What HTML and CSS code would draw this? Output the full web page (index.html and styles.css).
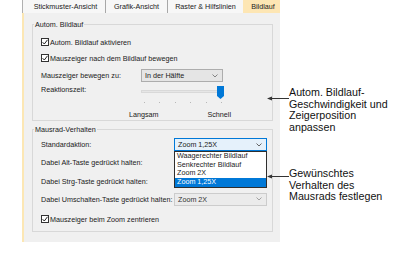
FILE: index.html
```html
<!DOCTYPE html>
<html lang="de">
<head>
<meta charset="utf-8">
<title>Bildlauf</title>
<link rel="stylesheet" href="styles.css">
</head>
<body>
<div class="stage">
  <div class="dialog">
    <div class="tabs">
      <div class="tab t1">Stickmuster-Ansicht</div>
      <div class="tab t2">Grafik-Ansicht</div>
      <div class="tab t3">Raster &amp; Hilfslinien</div>
      <div class="tab t4">Bildlauf</div>
    </div>
    <div class="pane">
      <fieldset class="group g1">
        <legend>Autom. Bildlauf</legend>
        <div class="chk"><span class="cb"><svg width="6" height="6" viewBox="0 0 6 6"><polyline points="0.6,3.2 2.3,5 5.5,0.8" fill="none" stroke="#222" stroke-width="1"/></svg></span>Autom. Bildlauf aktivieren</div>
        <div class="chk c2"><span class="cb"><svg width="6" height="6" viewBox="0 0 6 6"><polyline points="0.6,3.2 2.3,5 5.5,0.8" fill="none" stroke="#222" stroke-width="1"/></svg></span>Mauszeiger nach dem Bildlauf bewegen</div>
        <div class="field f1">
          <span class="lbl">Mauszeiger bewegen zu:</span>
          <div class="sel"><span>In der Hälfte</span><svg class="chev" width="6" height="4" viewBox="0 0 6 4"><polyline points="0.5,0.5 3,3 5.5,0.5" fill="none" stroke="#777" stroke-width="0.9"/></svg></div>
        </div>
        <div class="field f2">
          <span class="lbl">Reaktionszeit:</span>
          <div class="slider">
            <div class="track-area">
              <div class="track"></div>
              <svg class="thumb" width="7" height="13" viewBox="0 0 7 13"><polygon points="0,0 7,0 7,10 3.5,13 0,10" fill="#0078d7"/></svg>
            </div>
            <div class="ticks"><i></i><i></i><i></i><i></i><i></i><i></i></div>
          </div>
        </div>
        <div class="field f3">
          <span></span>
          <div class="ends"><span class="slow">Langsam</span><span class="fast">Schnell</span></div>
        </div>
      </fieldset>
      <fieldset class="group g2">
        <legend>Mausrad-Verhalten</legend>
        <div class="grid2">
          <span class="lbl">Standardaktion:</span>
          <div class="selwrap">
            <div class="sel focus"><span>Zoom 1,25X</span><svg class="chev" width="6" height="4" viewBox="0 0 6 4"><polyline points="0.5,0.5 3,3 5.5,0.5" fill="none" stroke="#555" stroke-width="0.9"/></svg></div>
            <ul class="list">
              <li>Waagerechter Bildlauf</li>
              <li>Senkrechter Bildlauf</li>
              <li>Zoom 2X</li>
              <li class="on">Zoom 1,25X</li>
            </ul>
          </div>
          <span class="lbl">Dabei Alt-Taste gedrückt halten:</span>
          <div class="sel covered"></div>
          <span class="lbl">Dabei Strg-Taste gedrückt halten:</span>
          <div class="sel light covered"></div>
          <span class="lbl">Dabei Umschalten-Taste gedrückt halten:</span>
          <div class="sel light"><span>Zoom 2X</span><svg class="chev" width="6" height="4" viewBox="0 0 6 4"><polyline points="0.5,0.5 3,3 5.5,0.5" fill="none" stroke="#999" stroke-width="0.9"/></svg></div>
        </div>
        <div class="chk c3"><span class="cb"><svg width="6" height="6" viewBox="0 0 6 6"><polyline points="0.6,3.2 2.3,5 5.5,0.8" fill="none" stroke="#222" stroke-width="1"/></svg></span>Mauszeiger beim Zoom zentrieren</div>
      </fieldset>
    </div>
  </div>

  <div class="callout co1">
    <svg class="arrow" width="22" height="5" viewBox="0 0 22 5"><polygon points="0,2.5 5,0.6 5,4.4" fill="#333"/><line x1="4" y1="2.5" x2="22" y2="2.5" stroke="#333" stroke-width="1"/></svg>
    <div class="note">Autom. Bildlauf-<br>Geschwindigkeit und<br>Zeigerposition<br>anpassen</div>
  </div>
  <div class="callout co2">
    <svg class="arrow" width="22" height="5" viewBox="0 0 22 5"><polygon points="0,2.5 5,0.6 5,4.4" fill="#333"/><line x1="4" y1="2.5" x2="22" y2="2.5" stroke="#333" stroke-width="1"/></svg>
    <div class="note">Gewünschtes<br>Verhalten des<br>Mausrads festlegen</div>
  </div>
</div>
</body>
</html>
```
FILE: styles.css
```css
* { box-sizing: border-box; }
html, body { margin: 0; padding: 0; }
body {
  width: 403px;
  height: 260px;
  overflow: hidden;
  background: #ffffff;
  font-family: "Liberation Sans", Arial, sans-serif;
}
.stage {
  position: relative;
  width: 403px;
  height: 260px;
}
.dialog {
  margin-left: 22px;
  width: 258px;
  font-size: 7.2px;
  line-height: 9px;
  color: #1a1a1a;
}
.tabs {
  display: flex;
  height: 13px;
  background: #f7f7f7;
  border-left: 1px solid #b0b0b0;
}
.tab {
  display: flex;
  align-items: center;
  justify-content: center;
  white-space: nowrap;
}
.t1 { width: 83px; border-right: 1px solid #a8a8a8; padding-left: 3px; }
.t2 { width: 62px; border-right: 1px solid #a8a8a8; }
.t3 { width: 75px; }
.t4 { width: 37px; background: #fde6b4; padding-left: 3px; }

.pane {
  height: 229px;
  background: #f0f0f0;
  border-left: 2px solid #fce7b4;
  padding: 7px 7px 0 8px;
  font-size: 7.2px;
}
.group {
  margin: 0;
  min-width: 0;
  border: 1px solid #d8d8d8;
  padding: 7px 5px 1px 8px;
}
.group legend {
  padding: 0 1px;
  margin-left: -7px;
  line-height: 9px;
}
.g2 {
  margin-top: 4px;
  padding-top: 4px;
  padding-bottom: 6px;
}
.chk {
  display: flex;
  align-items: center;
  height: 12px;
  white-space: nowrap;
}
.c2 { margin-top: 4px; }
.c3 { margin-top: 7.5px; }
.cb {
  width: 8px;
  height: 8px;
  margin-right: 1px;
  border: 1px solid #333;
  background: #fff;
  display: flex;
  align-items: center;
  justify-content: center;
}
.field {
  display: grid;
  grid-template-columns: 100px 82px;
}
.f1 { margin-top: 5px; align-items: center; }
.f2 { margin-top: 3px; align-items: start; }
.f3 { margin-top: 7px; }
.lbl { white-space: nowrap; }

.sel {
  height: 13px;
  border: 1px solid #adadad;
  background: #e5e5e5;
  display: flex;
  align-items: center;
  justify-content: space-between;
  padding: 0 4px 0 3px;
  white-space: nowrap;
}
.sel.focus {
  border-color: #0078d7;
  background: #e5f1fb;
}
.sel.light {
  border-color: #cccccc;
  background: #ebebeb;
  color: #333;
}
.chev { display: block; }

.slider { width: 84px; }
.track-area {
  position: relative;
  height: 15px;
}
.track {
  position: absolute;
  left: 0;
  top: 5px;
  width: 78px;
  height: 3px;
  background: #e6e6e6;
  border: 1px solid #d9d9d9;
}
.thumb {
  position: absolute;
  left: 76px;
  top: 1px;
}
.ticks {
  display: flex;
  justify-content: space-between;
  padding: 0 3px 0 3px;
  margin-top: 2px;
}
.ticks i {
  display: block;
  width: 1px;
  height: 1px;
  background: #b8b8b8;
}
.ends {
  display: flex;
  justify-content: space-between;
  white-space: nowrap;
}
.slow { margin-left: -12px; }
.fast { margin-right: -8px; }

.grid2 {
  display: grid;
  grid-template-columns: 133px 93px;
  grid-auto-rows: 13px;
  row-gap: 5.33px;
  align-items: center;
}
.selwrap { position: relative; }
.list {
  position: absolute;
  left: 0;
  top: 13px;
  width: 93px;
  margin: 0;
  padding: 0;
  list-style: none;
  background: #ffffff;
  border: 1px solid #2e2e2e;
  z-index: 2;
}
.list li {
  height: 8.7px;
  line-height: 8.7px;
  padding-left: 2px;
  white-space: nowrap;
}
.list li.on {
  background: #0078d7;
  color: #ffffff;
}

.callout {
  position: absolute;
  left: 267px;
  display: flex;
  align-items: flex-start;
  color: #111;
  font-size: 10.7px;
  line-height: 11.7px;
}
.co1 { top: 87px; }
.co2 { top: 168px; }
.arrow { display: block; flex: none; }
.co1 .arrow { margin-top: 8.5px; }
.co2 .arrow { margin-top: 5.5px; }
.note { white-space: nowrap; }
```
